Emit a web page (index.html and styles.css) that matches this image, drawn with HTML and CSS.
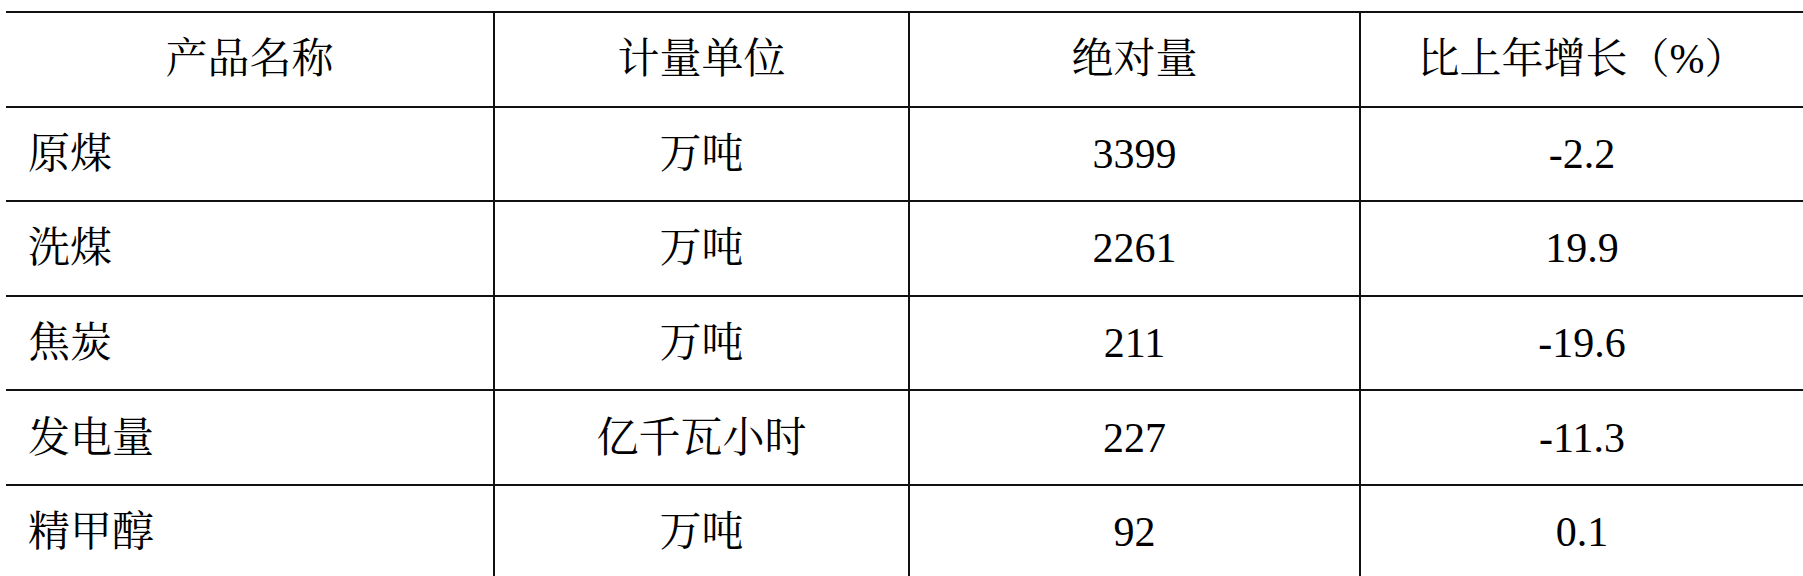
FILE: index.html
```html
<!DOCTYPE html>
<html lang="zh-CN">
<head>
<meta charset="utf-8">
<title>主要工业产品产量</title>
<link rel="stylesheet" href="styles.css">
</head>
<body>
<table class="stats">
  <colgroup>
    <col class="c1"><col class="c2"><col class="c3"><col class="c4">
  </colgroup>
  <thead>
    <tr><th>产品名称</th><th>计量单位</th><th>绝对量</th><th>比上年增长（%）</th></tr>
  </thead>
  <tbody>
    <tr><td class="name">原煤</td><td>万吨</td><td class="num">3399</td><td class="num">-2.2</td></tr>
    <tr><td class="name">洗煤</td><td>万吨</td><td class="num">2261</td><td class="num">19.9</td></tr>
    <tr><td class="name">焦炭</td><td>万吨</td><td class="num">211</td><td class="num">-19.6</td></tr>
    <tr><td class="name">发电量</td><td>亿千瓦小时</td><td class="num">227</td><td class="num">-11.3</td></tr>
    <tr><td class="name">精甲醇</td><td>万吨</td><td class="num">92</td><td class="num">0.1</td></tr>
  </tbody>
</table>
</body>
</html>
```
FILE: styles.css
```css
html, body {
  margin: 0;
  padding: 0;
  background: #ffffff;
  overflow: hidden;
}
body {
  padding: 11px 0 0 6px;
  color: #000;
}
.stats {
  border-collapse: collapse;
  table-layout: fixed;
  width: 1797px;
  font-family: "Liberation Serif", "Times New Roman", "Noto Serif CJK SC", "Noto Sans CJK SC", serif;
  font-size: 42px;
}
.c1 { width: 488px; }
.c2 { width: 415px; }
.c3 { width: 451px; }
.c4 { width: 443px; }
.stats th,
.stats td {
  height: 92.6px;
  padding: 0;
  border-top: 2px solid #111;
  border-bottom: 2px solid #111;
  border-left: 2px solid #111;
  text-align: center;
  vertical-align: middle;
  font-weight: normal;
  line-height: 1;
}
.stats .num {
  font-family: "Liberation Serif", "Times New Roman", serif;
}
.stats th:first-child,
.stats td:first-child {
  border-left: none;
}
.stats td.name {
  text-align: left;
  padding-left: 22px;
}
```
